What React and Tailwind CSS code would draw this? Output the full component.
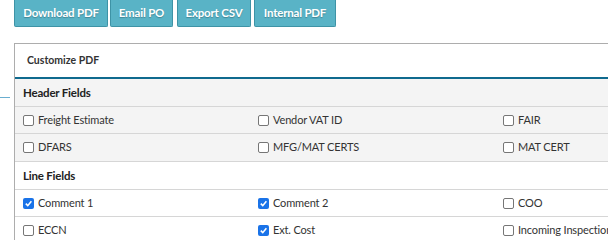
import React from 'react'

const headerFields = [
  ['Freight Estimate', false], ['Vendor VAT ID', false], ['FAIR', false],
  ['DFARS', false], ['MFG/MAT CERTS', false], ['MAT CERT', false],
]
const lineFields = [
  ['Comment 1', true], ['Comment 2', true], ['COO', false],
  ['ECCN', false], ['Ext. Cost', true], ['Incoming Inspection', false],
]

function Box({ checked }) {
  if (checked) {
    return (
      <span className="w-[11px] h-[11px] rounded-[2px] bg-[#1a73e8] flex items-center justify-center shrink-0">
        <svg width="9" height="9" viewBox="0 0 10 10">
          <path d="M2 5.2 L4.2 7.4 L8.2 2.6" stroke="white" strokeWidth="1.8" fill="none" />
        </svg>
      </span>
    )
  }
  return <span className="w-[11px] h-[11px] rounded-[2px] border border-[#767676] bg-white shrink-0" />
}

function Rows({ items, bg, heights }) {
  const rows = [items.slice(0, 3), items.slice(3, 6)]
  return rows.map((r, i) => (
    <div key={i} className={`grid grid-cols-[235px_245px_1fr] items-center pl-[8px] border-b border-[#d6d6d6] ${bg} ${heights[i]}`}>
      {r.map(([label, checked]) => (
        <div key={label} className="flex items-center gap-[4px] text-[11px] tracking-[-0.15px] text-[#333] whitespace-nowrap">
          <Box checked={checked} />
          <span>{label}</span>
        </div>
      ))}
    </div>
  ))
}

export default function App() {
  const btn = 'h-[27px] px-0 whitespace-nowrap text-center bg-[#59b3c6] border border-[#3e93a6] border-t-0 rounded-b-[2px] text-white font-bold text-[11.5px] tracking-[-0.2px] [text-shadow:0_1px_1px_rgba(0,0,0,0.25)]'
  return (
    <div className="w-[608px] h-[240px] overflow-hidden bg-white font-['Lato','Liberation_Sans',sans-serif]">
      <div className="flex gap-[2px] pl-[14px]">
        <button className={`${btn} w-[94px]`}>Download PDF</button>
        <button className={`${btn} w-[63px]`}>Email PO</button>
        <button className={`${btn} w-[74px] ml-[2px]`}>Export CSV</button>
        <button className={`${btn} w-[82px] ml-[1px]`}>Internal PDF</button>
      </div>
      <div className="flex mt-[16px]">
        <div className="w-[14px] shrink-0">
          <div className="mt-[54px] h-px w-[10px] bg-[#6aaed0]" />
        </div>
        <div className="w-[620px] shrink-0 border-l border-t border-[#adadad]">
          <div className="h-[35px] flex items-center pl-[12px] text-[10.5px] font-bold text-[#333] border-b-2 border-[#0f6a8e]">
            Customize PDF
          </div>
          <div className="h-[28px] flex items-center pl-[8px] text-[11.5px] tracking-[-0.2px] font-bold text-[#222] bg-[#f4f4f4] border-b border-[#d6d6d6]">
            Header Fields
          </div>
          <Rows items={headerFields} bg="bg-[#f4f4f4]" heights={['h-[27px]', 'h-[28px]']} />
          <div className="h-[28px] flex items-center pl-[8px] text-[11.5px] tracking-[-0.2px] font-bold text-[#222] border-b border-[#d6d6d6]">
            Line Fields
          </div>
          <Rows items={lineFields} bg="bg-white" heights={['h-[27px]', 'h-[28px]']} />
        </div>
      </div>
    </div>
  )
}
